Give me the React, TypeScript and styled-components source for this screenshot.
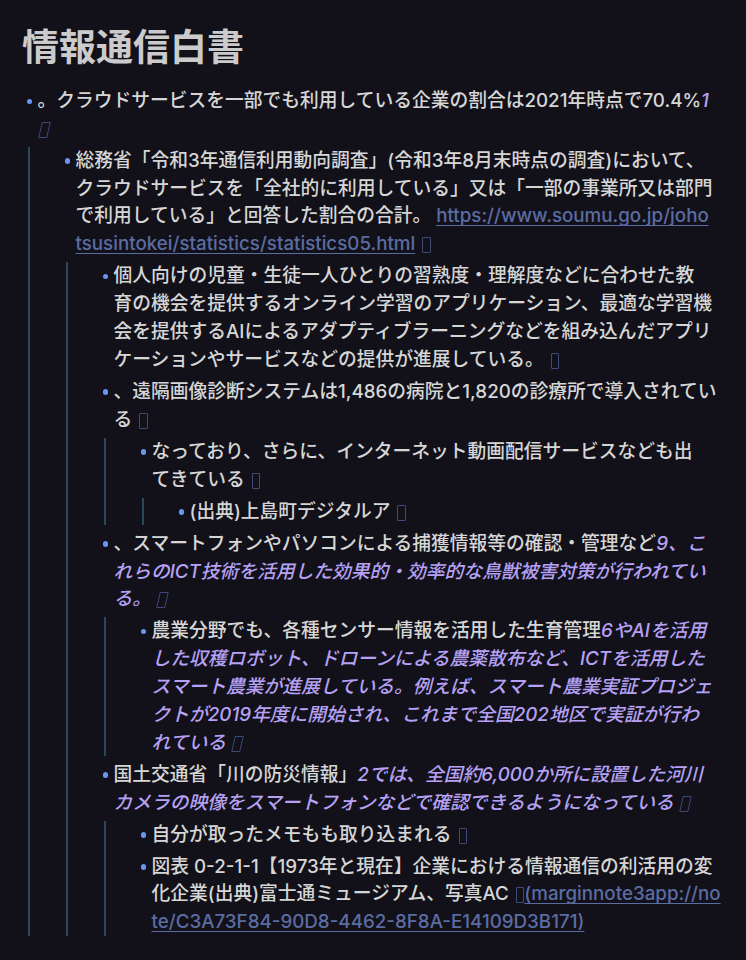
import React from "react";
import styled, { createGlobalStyle, css } from "styled-components";

const GlobalStyle = createGlobalStyle`
  html, body { margin: 0; padding: 0; background: #121119; }
  body { font-family: Inter, "Noto Sans CJK JP", sans-serif; }
`;

const Page = styled.main`
  padding: 23px 8px 0 22px;
  color: #d6d6d6;
  font-family: Inter, "Noto Sans CJK JP", sans-serif;
`;

const Title = styled.h1`
  margin: 0 0 20px;
  font-size: 37px;
  line-height: 44px;
  font-weight: 700;
  color: #cbcbcb;
  font-family: "Noto Sans CJK JP", sans-serif;
`;

const List = styled.ul<{ $nested?: boolean }>`
  list-style: none;
  margin: 0;
  display: flex;
  flex-direction: column;
  gap: 4.3px;
  padding: 0 0 0 15.5px;
  ${(p) =>
    p.$nested &&
    css`
      margin: 4.3px 0 0 -9.5px;
      padding-left: 45.5px;
      border-left: 2px solid #284959;
    `}
`;

const Item = styled.li`
  position: relative;
  font-size: 18.75px;
  line-height: 27.8px;
  font-weight: 500;
  &::before {
    content: "";
    position: absolute;
    left: -11px;
    top: 11.5px;
    width: 5.5px;
    height: 5.5px;
    border-radius: 50%;
    background: #6a96f2;
  }
`;

const Text = styled.div`
  white-space: normal;
`;

const Em = styled.em`
  font-style: italic;
  color: #b6a1f5;
`;

const Link = styled.a`
  color: #5b6ca3;
  text-decoration: underline;
  text-decoration-thickness: 1px;
  text-underline-offset: 3px;
`;

const Tofu = styled.span<{ $slant?: boolean }>`
  display: inline-block;
  box-sizing: border-box;
  width: 8.5px;
  height: 16px;
  margin-left: 2px;
  border: 1.6px solid #3f4a76;
  border-radius: 1px;
  vertical-align: -3px;
  ${(p) =>
    p.$slant &&
    css`
      transform: skewX(-13deg);
    `}
`;

export default function App() {
  return (
    <>
      <GlobalStyle />
      <Page>
        <Title>情報通信白書</Title>
        <List>
          <Item>
            <Text>
              。クラウドサービスを一部でも利用している企業の割合は2021年時点で70.4%
              <Em>
                1<br />
                <Tofu $slant />
              </Em>
            </Text>
            <List $nested>
              <Item>
                <Text>
                  総務省「令和3年通信利用動向調査」(令和3年8月末時点の調査)において、
                  <br />
                  クラウドサービスを「全社的に利用している」又は「一部の事業所又は部門
                  <br />
                  で利用している」と回答した割合の合計。{" "}
                  <Link href="#">
                    https://www.soumu.go.jp/joho
                    <br />
                    tsusintokei/statistics/statistics05.html
                  </Link>{" "}
                  <Tofu />
                </Text>
                <List $nested>
                  <Item>
                    <Text>
                      個人向けの児童・生徒一人ひとりの習熟度・理解度などに合わせた教
                      <br />
                      育の機会を提供するオンライン学習のアプリケーション、最適な学習機
                      <br />
                      会を提供するAIによるアダプティブラーニングなどを組み込んだアプリ
                      <br />
                      ケーションやサービスなどの提供が進展している。 <Tofu />
                    </Text>
                  </Item>
                  <Item>
                    <Text>
                      、遠隔画像診断システムは1,486の病院と1,820の診療所で導入されてい
                      <br />
                      る <Tofu />
                    </Text>
                    <List $nested>
                      <Item>
                        <Text>
                          なっており、さらに、インターネット動画配信サービスなども出
                          <br />
                          てきている <Tofu />
                        </Text>
                        <List $nested>
                          <Item>
                            <Text>
                              (出典)上島町デジタルア <Tofu />
                            </Text>
                          </Item>
                        </List>
                      </Item>
                    </List>
                  </Item>
                  <Item>
                    <Text>
                      、スマートフォンやパソコンによる捕獲情報等の確認・管理など
                      <Em>
                        9、こ
                        <br />
                        れらのICT技術を活用した効果的・効率的な鳥獣被害対策が行われてい
                        <br />
                        る。 <Tofu $slant />
                      </Em>
                    </Text>
                    <List $nested>
                      <Item>
                        <Text>
                          農業分野でも、各種センサー情報を活用した生育管理
                          <Em>
                            6やAIを活用
                            <br />
                            した収穫ロボット、ドローンによる農薬散布など、ICTを活用した
                            <br />
                            スマート農業が進展している。例えば、スマート農業実証プロジェ
                            <br />
                            クトが2019年度に開始され、これまで全国202地区で実証が行わ
                            <br />
                            れている <Tofu $slant />
                          </Em>
                        </Text>
                      </Item>
                    </List>
                  </Item>
                  <Item>
                    <Text>
                      国土交通省「川の防災情報」
                      <Em>
                        2では、全国約6,000か所に設置した河川
                        <br />
                        カメラの映像をスマートフォンなどで確認できるようになっている{" "}
                        <Tofu $slant />
                      </Em>
                    </Text>
                    <List $nested>
                      <Item>
                        <Text>
                          自分が取ったメモもも取り込まれる <Tofu />
                        </Text>
                      </Item>
                      <Item>
                        <Text>
                          図表 0-2-1-1【1973年と現在】企業における情報通信の利活用の変
                          <br />
                          化企業(出典)富士通ミュージアム、写真AC <Tofu />
                          <Link href="#">
                            (marginnote3app://no
                            <br />
                            te/C3A73F84-90D8-4462-8F8A-E14109D3B171)
                          </Link>
                        </Text>
                      </Item>
                    </List>
                  </Item>
                </List>
              </Item>
            </List>
          </Item>
        </List>
      </Page>
    </>
  );
}
